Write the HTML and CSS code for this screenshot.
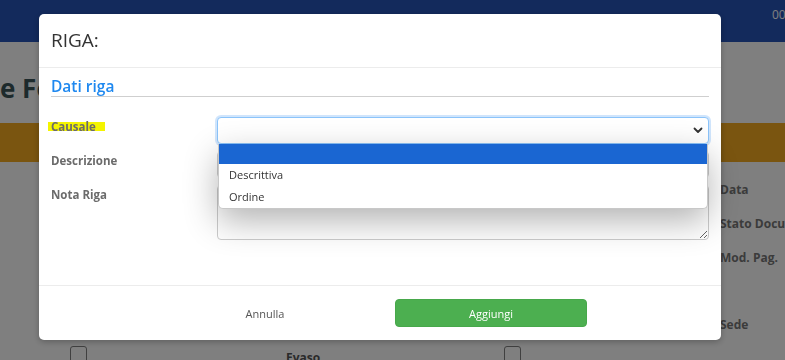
FILE: index.html
```html
<!DOCTYPE html>
<html lang="it">
<head>
  <meta charset="UTF-8" />
  <meta name="viewport" content="width=device-width, initial-scale=1.0" />
  <title>Ordine Fornitore - Riga</title>
  <link rel="stylesheet" href="styles.css">
</head>
<body>
  <div class="page">
    <nav class="topbar">
      <span class="user">00</span>
    </nav>
    <h1 class="page-title">e Fornitore</h1>
    <div class="band"></div>

    <div class="page-body">
      <div class="page-main">
        <div class="checks">
          <span class="checkbox"></span>
          <span class="check-label">Evaso</span>
          <span class="checkbox"></span>
        </div>
      </div>
      <div class="page-side">
        <div class="side-field">Data</div>
        <div class="side-field">Stato Documento</div>
        <div class="side-field side-field-tall">Mod. Pag.</div>
        <div class="side-field">Sede</div>
      </div>
    </div>
  </div>

  <!-- modal backdrop -->
  <div class="backdrop"></div>

  <div class="modal">
    <div class="modal-header">
      <h5 class="modal-title">RIGA:</h5>
    </div>

    <div class="modal-body">
      <div class="legend">Dati riga</div>

      <div class="form-grid">
        <label class="form-label"><span class="mark">Causale</span></label>
        <div class="select-wrap">
          <select class="form-control form-select is-focused">
            <option></option>
            <option>Descrittiva</option>
            <option>Ordine</option>
          </select>
          <svg class="select-arrow" width="10" height="7" viewBox="0 0 10 7">
            <path d="M1.5 1.5 L5 5 L8.5 1.5" fill="none" stroke="#333" stroke-width="1.8" stroke-linecap="round" stroke-linejoin="round"/>
          </svg>
          <!-- open option list -->
          <ul class="option-list">
            <li class="option option-active"></li>
            <li class="option">Descrittiva</li>
            <li class="option">Ordine</li>
          </ul>
        </div>

        <label class="form-label">Descrizione</label>
        <input class="form-control" type="text">

        <label class="form-label">Nota Riga</label>
        <textarea class="form-control form-textarea"></textarea>
      </div>
    </div>

    <div class="modal-footer">
      <button class="btn btn-link">Annulla</button>
      <button class="btn btn-success">Aggiungi</button>
    </div>
  </div>
</body>
</html>
```

FILE: styles.css
```css
body {
  margin: 0;
  padding: 0;
  font-family: 'Open Sans', 'Noto Sans', sans-serif;
  background-color: #fff;
  color: #333;
  overflow: hidden;
}
.page {
  height: 360px;
  overflow: hidden;
}
.topbar {
  height: 42px;
  background-color: #2654b8;
  display: flex;
  justify-content: flex-end;
}
.user {
  color: #fff;
  font-size: 12px;
  line-height: 18px;
  margin-top: 6px;
  width: 13px;
  overflow: hidden;
}
.page-title {
  margin: 28px 0 17px;
  font-size: 26px;
  line-height: 36px;
  font-weight: 700;
  color: #3b5458;
  white-space: nowrap;
}
.band {
  height: 39px;
  background-color: #f4aa20;
}
.page-body {
  display: grid;
  grid-template-columns: 720px 1fr;
}
.checks {
  margin-top: 184px;
  padding-left: 70px;
  display: flex;
  align-items: flex-start;
}
.checkbox {
  width: 15px;
  height: 15px;
  border: 1px solid #808080;
  border-radius: 3px;
  flex-shrink: 0;
}
.check-label {
  width: 218px;
  padding-left: 199px;
  margin-top: 3px;
  font-size: 12px;
  font-weight: 700;
  color: #555;
}
.page-side {
  padding-top: 19px;
}
.side-field {
  font-size: 12px;
  font-weight: 700;
  line-height: 18px;
  color: #777;
  margin-bottom: 16px;
  white-space: nowrap;
}
.side-field-tall {
  margin-bottom: 49px;
}

.backdrop {
  position: fixed;
  inset: 0;
  background-color: rgba(0, 0, 0, 0.5);
}

.modal {
  position: fixed;
  top: 14px;
  left: 39px;
  width: 682px;
  background-color: #fff;
  border-radius: 5px;
  box-shadow: 0 2px 6px rgba(0, 0, 0, 0.25);
}
.modal-header {
  padding: 12px;
  border-bottom: 1px solid #ececec;
}
.modal-title {
  margin: 0;
  font-size: 19px;
  line-height: 29px;
  font-weight: 400;
  color: #333;
}
.modal-body {
  padding: 8px 12px 45px;
}
.legend {
  font-size: 15.5px;
  line-height: 20px;
  font-weight: 600;
  color: #1e88f0;
  border-bottom: 1px solid #cfcfcf;
  margin-bottom: 20px;
}
.form-grid {
  display: grid;
  grid-template-columns: 166px 1fr;
  row-gap: 7px;
}
.form-label {
  font-size: 11.5px;
  font-weight: 700;
  line-height: 18px;
  color: #6b6b6b;
  margin-top: 1px;
}
.mark {
  display: inline-block;
  padding: 0 9px 0 3px;
  margin-left: -3px;
  background: linear-gradient(transparent 4px, #f4f400 4px, #f4f400 13px, transparent 13px);
}
.form-control {
  box-sizing: border-box;
  width: 100%;
  height: 27px;
  margin: 0;
  border: 1px solid #ccc;
  border-radius: 4px;
  background-color: #fff;
  font-family: inherit;
  font-size: 12px;
  outline: none;
}
.select-wrap {
  position: relative;
}
.form-select {
  appearance: none;
  -webkit-appearance: none;
  display: block;
}
.is-focused {
  border-color: #8cc4fa;
  box-shadow: 0 0 0 2px rgba(120, 180, 245, 0.35);
}
.select-arrow {
  position: absolute;
  right: 6px;
  top: 10px;
}
.option-list {
  position: absolute;
  top: 100%;
  left: 1px;
  right: 1px;
  margin: 0;
  padding: 0;
  list-style: none;
  background-color: #fff;
  border: 1px solid #c8c8c8;
  border-top: none;
  border-radius: 0 0 5px 5px;
  box-shadow: 0 12px 34px rgba(0, 0, 0, 0.3);
  overflow: hidden;
  z-index: 2;
}
.option {
  height: 22px;
  line-height: 22px;
  padding-left: 10px;
  font-size: 11px;
  color: #333;
}
.option-active {
  height: 20px;
  background-color: #1a66d2;
}
.form-textarea {
  height: 55px;
  resize: vertical;
}
.modal-footer {
  border-top: 1px solid #ececec;
  padding: 13px 4px 13px 0;
  display: flex;
  justify-content: center;
  gap: 34px;
}
.btn {
  width: 192px;
  height: 28px;
  border: 1px solid transparent;
  border-radius: 4px;
  font-family: inherit;
  font-size: 11px;
  cursor: pointer;
}
.btn-link {
  background: none;
  color: #555;
}
.btn-success {
  background-color: #4caf50;
  border-color: #47a84b;
  color: #fff;
}
```
